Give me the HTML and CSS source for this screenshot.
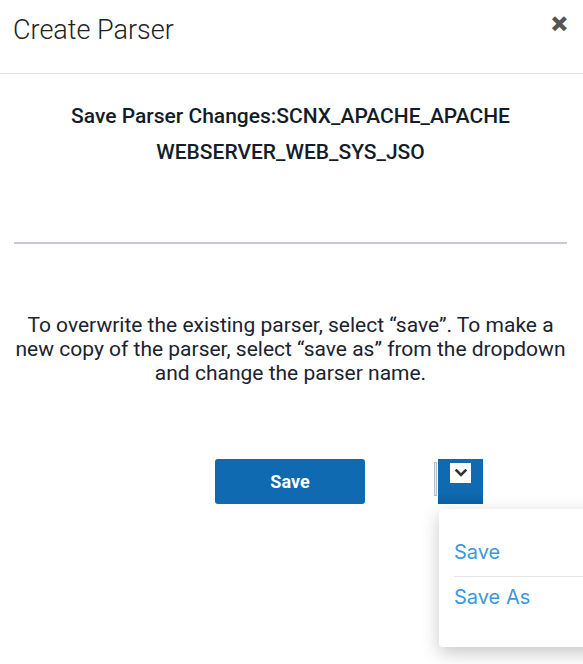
FILE: index.html
```html
<!DOCTYPE html>
<html>
<head>
<meta charset="utf-8">
<link rel="stylesheet" href="styles.css">
</head>
<body>
<div class="modal">
  <div class="modal-header">
    <h1 class="modal-title">Create Parser</h1>
    <span class="close">&#x2715;</span>
  </div>
  <div class="modal-body">
    <h2 class="save-title">Save Parser Changes:SCNX_APACHE_APACHE WEBSERVER_WEB_SYS_JSO</h2>
    <hr class="divider">
    <p class="info">To overwrite the existing parser, select “save”. To make a new copy of the parser, select “save as” from the dropdown and change the parser name.</p>
    <div class="actions">
      <button class="btn-save">Save</button>
      <div class="split">
        <span class="split-bar"></span>
        <div class="toggle">
          <span class="toggle-box">
            <svg width="12" height="8" viewBox="0 0 12 8"><path d="M1.5 1.5 L6 6 L10.5 1.5" fill="none" stroke="#333" stroke-width="2.6" stroke-linecap="square"/></svg>
          </span>
        </div>
        <div class="menu">
          <div class="menu-item">Save</div>
          <div class="menu-sep"></div>
          <div class="menu-item second">Save As</div>
        </div>
      </div>
    </div>
  </div>
</div>
</body>
</html>
```

FILE: styles.css
```css
* { box-sizing: border-box; }
html, body { margin: 0; padding: 0; }
body {
  width: 583px;
  height: 664px;
  overflow: hidden;
  background: #fff;
  font-family: Roboto, "Noto Sans", sans-serif;
  color: #1b2230;
}
.modal { position: relative; }
.modal-header {
  height: 74px;
  border-bottom: 1px solid #e4e4e4;
  display: flex;
  justify-content: space-between;
  align-items: flex-start;
  padding: 0 15px 0 13px;
}
.modal-title {
  margin: 0;
  padding-top: 13px;
  font-weight: 300;
  font-size: 27px;
  line-height: 34px;
  color: #222;
}
.close {
  margin-top: 12px;
  font-size: 20px;
  font-weight: 700;
  color: #555;
  line-height: 24px;
  -webkit-text-stroke: 1.5px #555;
}
.modal-body { padding: 24px 16px 0 14px; }
.save-title {
  margin: 0 auto;
  width: 490px;
  text-align: center;
  font-size: 21px;
  font-weight: 500;
  line-height: 36px;
  color: #141c29;
}
.divider {
  margin: 72px 0 0 0;
  border: 0;
  height: 2px;
  background: #c6cbd9;
}
.info {
  margin: 69px -4px 0 -4px;
  text-align: center;
  font-size: 21px;
  line-height: 24px;
  color: #1b2230;
}
.actions {
  margin-top: 74px;
  display: flex;
  align-items: flex-start;
  padding-left: 201px;
}
.btn-save {
  width: 150px;
  height: 45px;
  border: 0;
  border-radius: 3px;
  background: #0f6ab2;
  color: #fff;
  font-family: Roboto, sans-serif;
  font-weight: 700;
  font-size: 18px;
  padding: 0;
}
.split {
  position: relative;
  display: flex;
  align-items: flex-start;
  margin-left: 69px;
}
.split-bar {
  width: 3px;
  height: 34px;
  margin-top: 3px;
  background: #eeeff2;
  border: 1px solid #b9bcc4;
  margin-right: 1px;
}
.toggle {
  width: 45px;
  height: 45px;
  background: linear-gradient(#0f6ab2 75%, #0c5fa0);
  padding: 4px 0 0 12px;
}
.toggle-box {
  display: flex;
  align-items: center;
  justify-content: center;
  width: 21px;
  height: 20px;
  background: #fff;
}
.menu {
  position: absolute;
  left: 5px;
  top: 50px;
  width: 170px;
  height: 138px;
  background: #fff;
  border-radius: 4px;
  box-shadow: 0 6px 18px rgba(0,0,0,0.22);
  padding: 28px 0 0 15px;
}
.menu-item {
  font-family: Inter, Roboto, sans-serif;
  font-size: 20px;
  line-height: 30px;
  color: #3a98de;
}
.menu-sep {
  margin-top: 9px;
  height: 1px;
  background: #e3e5ea;
}
.menu-item.second { margin-top: 5px; }
```
